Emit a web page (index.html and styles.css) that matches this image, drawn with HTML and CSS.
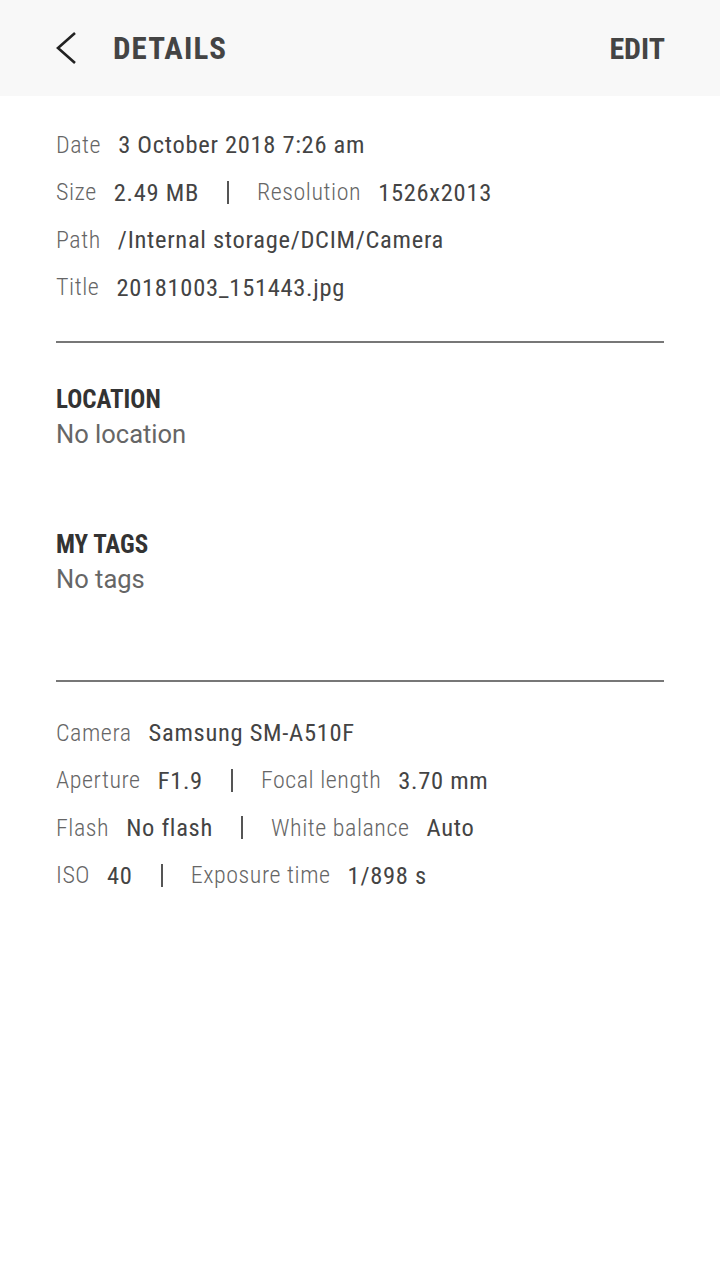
FILE: index.html
```html
<!DOCTYPE html>
<html lang="en">
<head>
    <meta charset="UTF-8">
    <meta name="viewport" content="width=device-width, initial-scale=1.0">
    <title>Details</title>
    <link rel="stylesheet" href="styles.css">
</head>
<body>
    <div class="topbar">
        <div class="topbar-left">
            <svg class="back" width="24" height="34" viewBox="0 0 24 34">
                <polyline points="20,2 3,17 20,32" fill="none" stroke="#222" stroke-width="2.6"/>
            </svg>
            <h1>DETAILS</h1>
        </div>
        <div class="edit">EDIT</div>
    </div>

    <div class="content">
        <div class="info">
            <div class="row"><span class="label">Date</span><span class="value">3 October 2018 7:26 am</span></div>
            <div class="row">
                <span class="label">Size</span><span class="value">2.49 MB</span>
                <span class="sep"></span>
                <span class="label">Resolution</span><span class="value">1526x2013</span>
            </div>
            <div class="row"><span class="label">Path</span><span class="value">/Internal storage/DCIM/Camera</span></div>
            <div class="row"><span class="label">Title</span><span class="value">20181003_151443.jpg</span></div>
        </div>

        <hr class="divider">

        <div class="section first">
            <h2>LOCATION</h2>
            <p>No location</p>
        </div>
        <div class="section">
            <h2>MY TAGS</h2>
            <p>No tags</p>
        </div>

        <hr class="divider second">

        <div class="info camera">
            <div class="row"><span class="label">Camera</span><span class="value">Samsung SM-A510F</span></div>
            <div class="row">
                <span class="label">Aperture</span><span class="value">F1.9</span>
                <span class="sep"></span>
                <span class="label">Focal length</span><span class="value">3.70 mm</span>
            </div>
            <div class="row">
                <span class="label">Flash</span><span class="value">No flash</span>
                <span class="sep"></span>
                <span class="label">White balance</span><span class="value">Auto</span>
            </div>
            <div class="row">
                <span class="label">ISO</span><span class="value">40</span>
                <span class="sep"></span>
                <span class="label">Exposure time</span><span class="value">1/898 s</span>
            </div>
        </div>
    </div>
</body>
</html>
```

FILE: styles.css
```css
body {
    margin: 0;
    background-color: #ffffff;
    font-family: "Roboto Condensed", Roboto, "Liberation Sans Narrow", sans-serif;
    font-stretch: condensed;
    color: #444;
}
.topbar {
    height: 96px;
    background-color: #f8f8f8;
    display: flex;
    align-items: center;
    justify-content: space-between;
    padding: 0 55px 0 55px;
}
.topbar-left {
    display: flex;
    align-items: center;
}
.back {
    display: block;
    margin-top: -1px;
}
h1 {
    margin: 0 0 0 34px;
    font-size: 31px;
    font-weight: bold;
    letter-spacing: 1.1px;
    color: #444;
}
.edit {
    font-size: 30px;
    font-weight: bold;
    color: #444;
}
.content {
    padding: 0 56px;
}
.info {
    padding-top: 25px;
}
.info.camera {
    padding-top: 27px;
}
.row {
    display: flex;
    align-items: center;
    height: 47.5px;
    font-size: 24px;
    letter-spacing: 0.55px;
}
.label {
    font-weight: 300;
    color: #666;
    margin-right: 17px;
}
.value {
    font-weight: 400;
    font-size: 24.5px;
    letter-spacing: 0.7px;
    color: #444;
}
.sep {
    width: 2px;
    height: 23px;
    background-color: #555;
    margin: 0 28px;
}
.divider {
    border: none;
    height: 2px;
    background-color: #777;
    margin: 30px 0 0 0;
}
.divider.second {
    margin-top: 83px;
}
.section {
    padding-top: 76px;
}
.section.first {
    padding-top: 40px;
}
h2 {
    margin: 0;
    font-size: 25px;
    font-weight: bold;
    color: #333;
    line-height: 34px;
}
.section p {
    margin: 0;
    font-family: Roboto, sans-serif;
    font-stretch: normal;
    font-size: 25.5px;
    color: #666;
    line-height: 35px;
}
```
